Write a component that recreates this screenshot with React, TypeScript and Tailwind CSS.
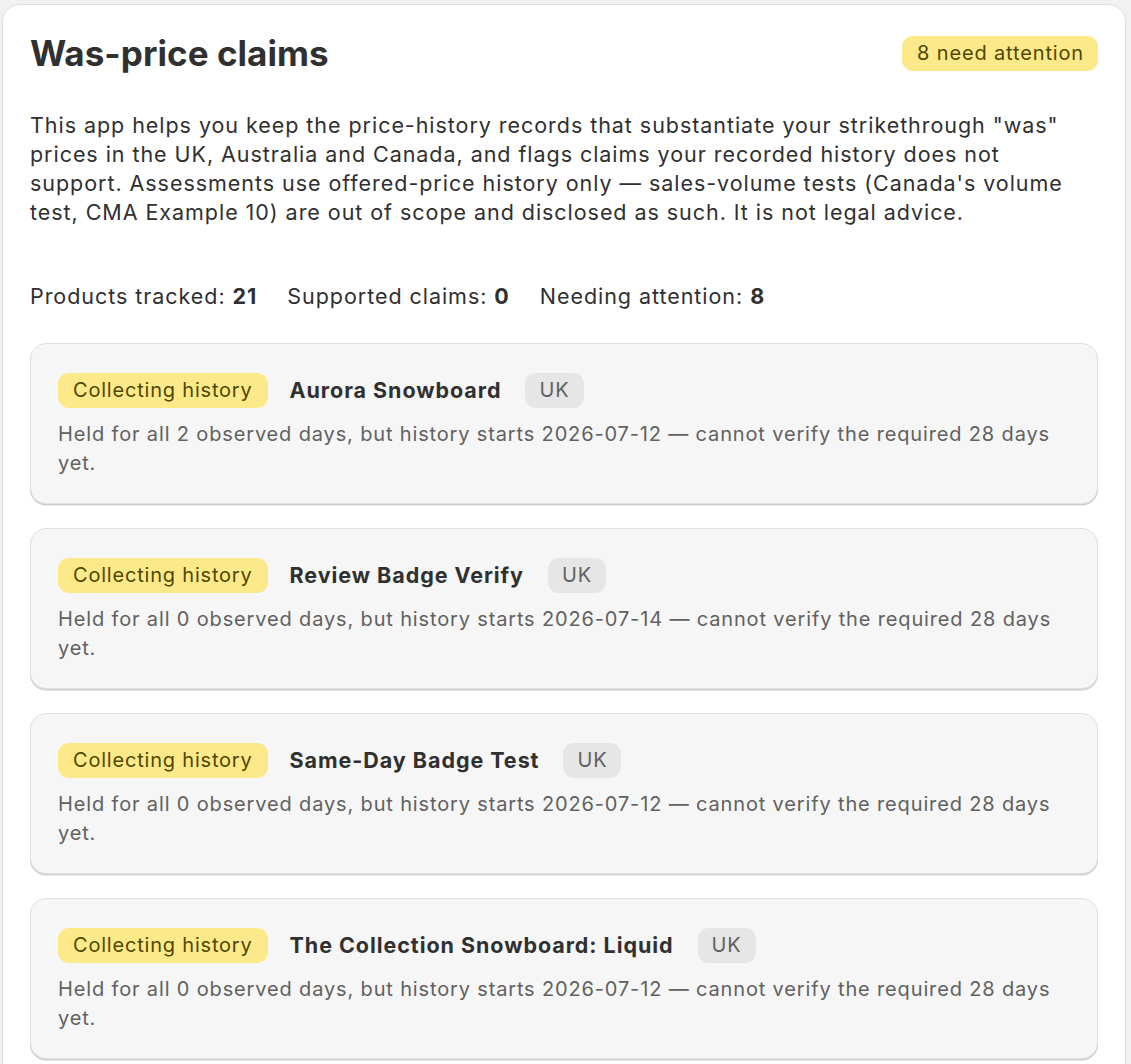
import React from "react";

const items = [
  { name: "Aurora Snowboard", days: 2, start: "2026-07-12" },
  { name: "Review Badge Verify", days: 0, start: "2026-07-14" },
  { name: "Same-Day Badge Test", days: 0, start: "2026-07-12" },
  { name: "The Collection Snowboard: Liquid", days: 0, start: "2026-07-12" },
  { name: "The Collection Snowboard: Hydrogen", days: 0, start: "2026-07-12" },
];

export default function App() {
  return (
    <div
      className="min-h-screen bg-[#f1f1f1] pt-[4px] pl-[2px] pr-[5px] text-[#303030]"
      style={{ fontFamily: "Inter, 'Noto Sans', sans-serif" }}
    >
      <div className="bg-white rounded-[18px] border border-[#dedede] px-[27px] pt-[27px] pb-[40px]">
        <div className="flex items-center justify-between">
          <h1 className="text-[35px] leading-[42px] font-bold tracking-[0.05px]">Was-price claims</h1>
          <span className="rounded-[11px] bg-[#fcea8a] text-[#4f4700] text-[20px] tracking-[0.85px] leading-[35px] pl-[15px] pr-[14px]">
            8 need attention
          </span>
        </div>
        <p className="mt-[37px] text-[21.5px] tracking-[0.95px] leading-[29px]">
          This app helps you keep the price-history records that substantiate your strikethrough "was"
          <br />
          prices in the UK, Australia and Canada, and flags claims your recorded history does not
          <br />
          support. Assessments use offered-price history only — sales-volume tests (Canada's volume
          <br />
          test, CMA Example 10) are out of scope and disclosed as such. It is not legal advice.
        </p>
        <div className="mt-[55px] flex gap-[30px] text-[21.5px] tracking-[0.95px] leading-[29px]">
          <span>
            Products tracked: <b className="font-bold">21</b>
          </span>
          <span>
            Supported claims: <b className="font-bold">0</b>
          </span>
          <span>
            Needing attention: <b className="font-bold">8</b>
          </span>
        </div>
        <div className="mt-[32px] flex flex-col gap-[24px]">
          {items.map((it) => (
            <div
              key={it.name}
              className="rounded-[16px] bg-[#f6f6f6] border border-[#e1e1e1] shadow-[0_1.5px_0_0_#cfcfcf] px-[27px] pt-[29px] pb-[25px]"
            >
              <div className="flex items-center gap-[22px]">
                <span className="rounded-[11px] bg-[#fcea8a] text-[#4f4700] text-[20px] tracking-[0.8px] leading-[35px] pl-[15px] pr-[15px]">
                  Collecting history
                </span>
                <span className="text-[21.5px] tracking-[0.95px] leading-[29px] font-bold text-[#303030]">{it.name}</span>
                <span className="ml-[2px] rounded-[11px] bg-[#e6e6e6] text-[#616161] text-[20px] tracking-[0.85px] leading-[35px] pl-[14px] pr-[14px]">
                  UK
                </span>
              </div>
              <p className="mt-[12px] text-[20px] tracking-[0.85px] leading-[29px] text-[#616161]">
                Held for all {it.days} observed days, but history starts {it.start} — cannot verify the required 28 days yet.
              </p>
            </div>
          ))}
        </div>
      </div>
    </div>
  );
}
